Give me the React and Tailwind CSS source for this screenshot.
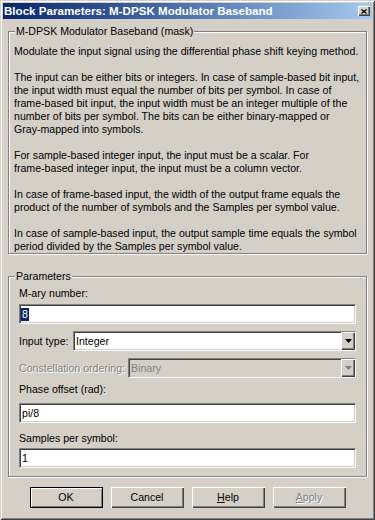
const paragraphs = [
  ['Modulate the input signal using the differential phase shift keying method.'],
  [
    'The input can be either bits or integers. In case of sample-based bit input,',
    'the input width must equal the number of bits per symbol. In case of',
    'frame-based bit input, the input width must be an integer multiple of the',
    'number of bits per symbol. The bits can be either binary-mapped or',
    'Gray-mapped into symbols.',
  ],
  [
    'For sample-based integer input, the input must be a scalar. For',
    'frame-based integer input, the input must be a column vector.',
  ],
  [
    'In case of frame-based input, the width of the output frame equals the',
    'product of the number of symbols and the Samples per symbol value.',
  ],
  [
    'In case of sample-based input, the output sample time equals the symbol',
    'period divided by the Samples per symbol value.',
  ],
];

const sunken =
  'border border-t-[#808080] border-l-[#808080] border-r-white border-b-white shadow-[inset_1px_1px_0_#404040,inset_-1px_-1px_0_#d4d0c8]';
const raised = 'shadow-[inset_1px_1px_0_#fff,inset_-1px_-1px_0_#404040,inset_-2px_-2px_0_#808080]';
const disabledText = 'text-[#808080] [text-shadow:1px_1px_0_#fff]';

function GroupBox({ title, className, children }) {
  return (
    <div
      className={`relative mx-[5px] border border-[#808080] shadow-[inset_1px_1px_0_#fff,1px_1px_0_#fff] ${className}`}
    >
      <span className="absolute -top-[7px] left-[6px] bg-[#d4d0c8] px-[1px] leading-[13px] whitespace-nowrap">
        {title}
      </span>
      {children}
    </div>
  );
}

function Edit({ value, selected }) {
  return (
    <div className={`h-[20px] bg-white flex items-center pl-[1px] ${sunken}`}>
      {selected ? (
        <span className="bg-[#0a246a] text-white px-[1px]">{value}</span>
      ) : (
        <span className="pl-[1px]">{value}</span>
      )}
    </div>
  );
}

function Arrow({ color }) {
  return (
    <svg width="7" height="4" viewBox="0 0 7 4">
      <path d="M0 0h7L3.5 4z" fill={color} />
    </svg>
  );
}

function Select({ value, width, disabled }) {
  return (
    <div
      className={`h-[20px] flex items-stretch ${sunken} ${width} ${disabled ? 'bg-[#d4d0c8]' : 'bg-white'}`}
    >
      <span className={`flex-1 flex items-center pl-[2px] ${disabled ? 'text-[#808080]' : ''}`}>{value}</span>
      <span className={`w-[14px] bg-[#d4d0c8] flex items-center justify-center ${raised}`}>
        <Arrow color={disabled ? '#808080' : '#000'} />
      </span>
    </div>
  );
}

function Button({ children, isDefault, disabled }) {
  return (
    <div
      className={`w-[73px] h-[21px] flex items-center justify-center ${
        isDefault ? 'border border-black shadow-[inset_1px_1px_0_#fff,inset_-1px_-1px_0_#808080]' : raised
      } ${disabled ? disabledText : ''}`}
    >
      {children}
    </div>
  );
}

export default function App() {
  return (
    <div className="w-[375px] h-[520px] bg-[#d4d0c8] p-[3px] flex flex-col font-['Liberation_Sans',Arial,sans-serif] text-[10.6px] leading-[13px] text-black shadow-[inset_1px_1px_0_#d4d0c8,inset_-1px_-1px_0_#404040,inset_2px_2px_0_#fff,inset_-2px_-2px_0_#808080]">
      {/* title bar */}
      <div className="h-[16px] flex items-center bg-linear-to-r from-[#0a246a] to-[#a6caf0] pl-[1px] pr-[2px]">
        <span className="text-white font-bold text-[11.6px] leading-[16px] whitespace-nowrap">
          Block Parameters: M-DPSK Modulator Baseband
        </span>
        <span className={`ml-auto w-[12px] h-[10px] bg-[#d4d0c8] flex items-center justify-center ${raised}`}>
          <svg width="6" height="5" viewBox="0 0 6 5">
            <path d="M0.5 0.5l5 4M5.5 0.5l-5 4" stroke="#000" strokeWidth="1.3" />
          </svg>
        </span>
      </div>

      <GroupBox title="M-DPSK Modulator Baseband (mask)" className="mt-[12px] pt-[13px] pl-[5px]">
        {paragraphs.map((p, i) => (
          <div key={i} className={i ? 'mt-[13px]' : ''}>
            {p.map((line) => (
              <div key={line} className="whitespace-nowrap">
                {line}
              </div>
            ))}
          </div>
        ))}
      </GroupBox>

      <GroupBox title="Parameters" className="mt-[22px] pt-[10px] pb-[8px] px-[10px]">
        <div>M-ary number:</div>
        <div className="mt-[4px]">
          <Edit value="8" selected />
        </div>
        <div className="mt-[7px] flex items-center justify-between">
          <span>Input type:</span>
          <Select value="Integer" width="w-[283px]" />
        </div>
        <div className="mt-[7px] flex items-center justify-between">
          <span className={disabledText}>Constellation ordering:</span>
          <Select value="Binary" width="w-[228px]" disabled />
        </div>
        <div className="mt-[5px]">Phase offset (rad):</div>
        <div className="mt-[7px]">
          <Edit value="pi/8" />
        </div>
        <div className="mt-[9px]">Samples per symbol:</div>
        <div className="mt-[3px]">
          <Edit value="1" />
        </div>
      </GroupBox>

      <div className="mt-[10px] flex justify-center gap-[8px]">
        <Button isDefault>OK</Button>
        <Button>Cancel</Button>
        <Button>
          <span>
            <span className="underline">H</span>elp
          </span>
        </Button>
        <Button disabled>
          <span>
            <span className="underline">A</span>pply
          </span>
        </Button>
      </div>
    </div>
  );
}
